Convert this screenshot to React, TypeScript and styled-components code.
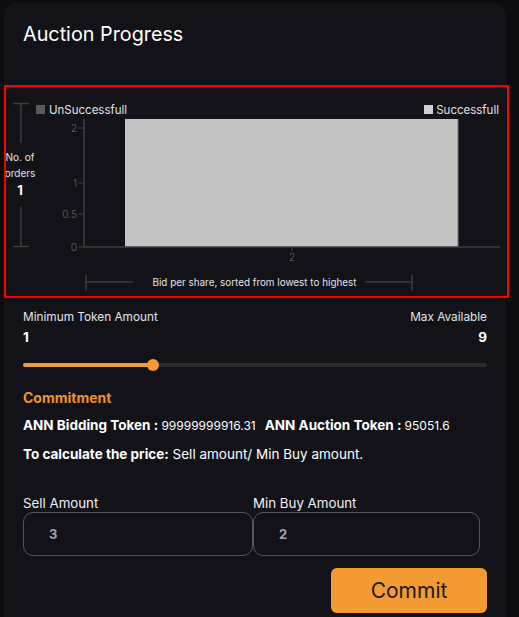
import React from "react";
import styled, { createGlobalStyle } from "styled-components";

const Global = createGlobalStyle`
  html, body { margin: 0; padding: 0; background: #0c0c0f; }
  body { font-family: "Inter", "Noto Sans", sans-serif; color: #ffffff; }
  * { box-sizing: border-box; }
`;

const Page = styled.div`
  padding: 3px 0 0 4px;
  height: 617px;
  overflow: hidden;
`;

const Card = styled.section`
  width: 502px;
  min-height: 640px;
  background: #121218;
  border-radius: 12px;
  padding: 19px 19px 0 19px;
`;

const Title = styled.h2`
  margin: 0;
  font-size: 19.8px;
  line-height: 24px;
  font-weight: 400;
  color: #ffffff;
`;

const ChartBox = styled.div`
  margin: 39px -22px 0 -19px;
  border: 2px solid #ff0000;
  height: 213px;
  overflow: hidden;
`;

const ChartSvg = styled.svg`
  display: block;
  font-family: "Inter", "Noto Sans", sans-serif;
`;

const RangeBlock = styled.div`
  margin-top: 11px;
`;

const SpreadRow = styled.div<{ $top?: number }>`
  display: flex;
  justify-content: space-between;
  align-items: center;
  margin-top: ${(p) => p.$top ?? 0}px;
`;

const SmallLabel = styled.span`
  font-size: 11.8px;
  line-height: 16px;
  color: #e4e4e8;
`;

const BigNumber = styled.span`
  font-size: 13.5px;
  line-height: 16px;
  font-weight: 700;
  color: #ffffff;
`;

const Slider = styled.div`
  margin-top: 14px;
  height: 12px;
  display: flex;
  align-items: center;
`;

const Track = styled.div`
  flex: 1;
  height: 4px;
  border-radius: 2px;
  background: #2b2b30;
  position: relative;
`;

const Fill = styled.div`
  height: 100%;
  border-radius: 2px;
  background: #f39a33;
`;

const Thumb = styled.div`
  position: absolute;
  top: 50%;
  width: 12px;
  height: 12px;
  border-radius: 50%;
  background: #f39a33;
  transform: translate(-50%, -50%);
`;

const SectionTitle = styled.div`
  margin-top: 18px;
  font-size: 14px;
  line-height: 18px;
  font-weight: 700;
  color: #f0922e;
`;

const InfoLine = styled.p<{ $gap: number }>`
  margin: ${(p) => p.$gap}px 0 0 0;
  font-size: 13.5px;
  line-height: 18px;
  color: #ffffff;
  display: flex;
  align-items: baseline;
  gap: 9px;
`;

const Strong = styled.b`
  font-weight: 700;
`;

const Digits = styled.span`
  font-size: 12px;
`;

const Fields = styled.div`
  margin-top: 32px;
  display: grid;
  grid-template-columns: 230px 227px;
`;

const Field = styled.label`
  display: flex;
  flex-direction: column;
  gap: 1px;
`;

const FieldLabel = styled.span`
  font-size: 13.3px;
  line-height: 16px;
  color: #f0f0f4;
`;

const Input = styled.input`
  height: 44px;
  width: 100%;
  border: 1px solid #55555c;
  border-radius: 10px;
  background: transparent;
  padding: 0 0 0 25px;
  font-family: "Inter", "Noto Sans", sans-serif;
  font-size: 13px;
  font-weight: 700;
  color: #a3a3ab;
  outline: none;
`;

const Actions = styled.div`
  margin-top: 12px;
  display: flex;
  justify-content: flex-end;
`;

const CommitButton = styled.button`
  width: 156px;
  height: 45px;
  border: none;
  border-radius: 6px;
  background: #f39a33;
  color: #1a1a1a;
  font-family: "Inter", "Noto Sans", sans-serif;
  font-size: 21px;
  font-weight: 400;
  cursor: pointer;
`;

const axis = "#3d3d42";
const tickText = "#56565c";

function Chart() {
  const yTicks: [string, number][] = [
    ["2", 128],
    ["1", 183],
    ["0.5", 214],
    ["0", 247],
  ];
  return (
    <ChartSvg width={501} height={209} viewBox="6 87 501 209">
      <rect x={36} y={105} width={9} height={9} fill="#5a5a5e" />
      <text x={49} y={114} fontSize={11.5} fill="#e2e2e6">UnSuccessfull</text>
      <rect x={424} y={105} width={9} height={9} fill="#cfcfcf" />
      <text x={499} y={114} fontSize={11.5} fill="#e2e2e6" textAnchor="end">Successfull</text>

      <line x1={13} y1={103.5} x2={29} y2={103.5} stroke={axis} strokeWidth={1.5} />
      <line x1={21} y1={103} x2={21} y2={143} stroke={axis} strokeWidth={1.5} />
      <text x={20} y={161} fontSize={10} fill="#e2e2e6" textAnchor="middle">No. of</text>
      <text x={20} y={177} fontSize={10} fill="#e2e2e6" textAnchor="middle">orders</text>
      <text x={20} y={195} fontSize={13} fontWeight={700} fill="#ffffff" textAnchor="middle">1</text>
      <line x1={21} y1={207} x2={21} y2={247} stroke={axis} strokeWidth={1.5} />
      <line x1={13} y1={246.5} x2={29} y2={246.5} stroke={axis} strokeWidth={1.5} />

      <rect x={125} y={119} width={333} height={128} fill="#c4c4c4" />
      <line x1={458} y1={119} x2={458} y2={247} stroke="#7a7a7a" strokeWidth={1} />

      <line x1={84} y1={119} x2={84} y2={247} stroke={axis} strokeWidth={1.5} />
      <line x1={84} y1={247} x2={500} y2={247} stroke={axis} strokeWidth={1.5} />

      {yTicks.map(([label, y]) => (
        <g key={label}>
          <line x1={78} y1={y} x2={84} y2={y} stroke={axis} strokeWidth={1} />
          <text x={77} y={y + 3.5} fontSize={10} fill={tickText} textAnchor="end">{label}</text>
        </g>
      ))}

      <line x1={292} y1={247} x2={292} y2={251} stroke={axis} strokeWidth={1} />
      <text x={292} y={260.5} fontSize={10} fill={tickText} textAnchor="middle">2</text>

      <line x1={86} y1={275} x2={86} y2={291} stroke={axis} strokeWidth={1.5} />
      <line x1={86} y1={282} x2={133} y2={282} stroke={axis} strokeWidth={1.5} />
      <text x={254.5} y={285.5} fontSize={9.9} fill="#e2e2e6" textAnchor="middle">
        Bid per share, sorted from lowest to highest
      </text>
      <line x1={365} y1={282} x2={412} y2={282} stroke={axis} strokeWidth={1.5} />
      <line x1={412} y1={275} x2={412} y2={291} stroke={axis} strokeWidth={1.5} />
    </ChartSvg>
  );
}

export default function App() {
  const min = 1;
  const max = 9;
  const value = 3.24;
  const pct = ((value - min) / (max - min)) * 100;
  return (
    <Page>
      <Global />
      <Card>
        <Title>Auction Progress</Title>
        <ChartBox>
          <Chart />
        </ChartBox>

        <RangeBlock>
          <SpreadRow>
            <SmallLabel>Minimum Token Amount</SmallLabel>
            <SmallLabel>Max Available</SmallLabel>
          </SpreadRow>
          <SpreadRow $top={4}>
            <BigNumber>{min}</BigNumber>
            <BigNumber>{max}</BigNumber>
          </SpreadRow>
          <Slider>
            <Track>
              <Fill style={{ width: `${pct}%` }} />
              <Thumb style={{ left: `${pct}%` }} />
            </Track>
          </Slider>
        </RangeBlock>

        <SectionTitle>Commitment</SectionTitle>
        <InfoLine $gap={9}>
          <span>
            <Strong>ANN Bidding Token : </Strong>
            <Digits>99999999916.31</Digits>
          </span>
          <span>
            <Strong>ANN Auction Token : </Strong>
            <Digits>95051.6</Digits>
          </span>
        </InfoLine>
        <InfoLine $gap={10}>
          <span>
            <Strong>To calculate the price:</Strong> Sell amount/ Min Buy amount.
          </span>
        </InfoLine>

        <Fields>
          <Field>
            <FieldLabel>Sell Amount</FieldLabel>
            <Input defaultValue="3" />
          </Field>
          <Field>
            <FieldLabel>Min Buy Amount</FieldLabel>
            <Input defaultValue="2" />
          </Field>
        </Fields>

        <Actions>
          <CommitButton>Commit</CommitButton>
        </Actions>
      </Card>
    </Page>
  );
}
